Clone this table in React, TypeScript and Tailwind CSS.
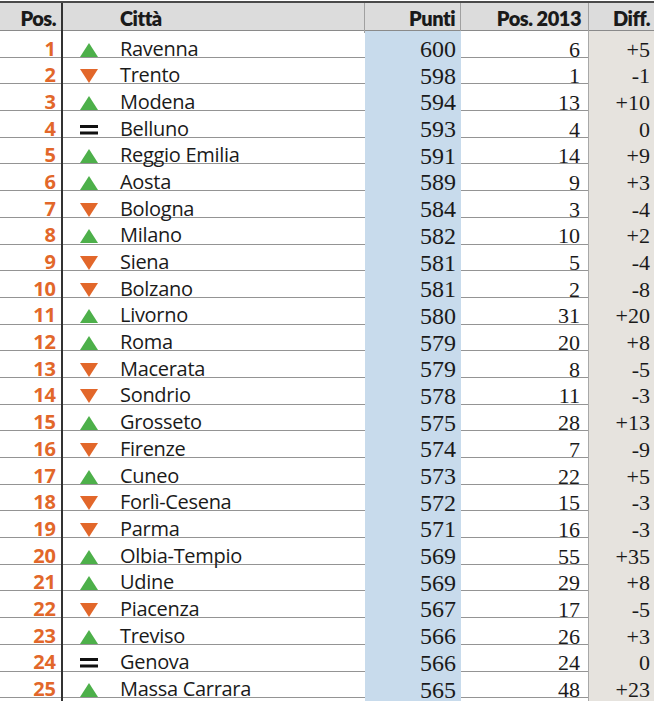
import React from "react";

type Trend = "up" | "down" | "eq";

interface Row {
  pos: number;
  trend: Trend;
  city: string;
  punti: number;
  prev: number;
  diff: string;
}

const rows: Row[] = [
  { pos: 1, trend: "up", city: "Ravenna", punti: 600, prev: 6, diff: "+5" },
  { pos: 2, trend: "down", city: "Trento", punti: 598, prev: 1, diff: "-1" },
  { pos: 3, trend: "up", city: "Modena", punti: 594, prev: 13, diff: "+10" },
  { pos: 4, trend: "eq", city: "Belluno", punti: 593, prev: 4, diff: "0" },
  { pos: 5, trend: "up", city: "Reggio Emilia", punti: 591, prev: 14, diff: "+9" },
  { pos: 6, trend: "up", city: "Aosta", punti: 589, prev: 9, diff: "+3" },
  { pos: 7, trend: "down", city: "Bologna", punti: 584, prev: 3, diff: "-4" },
  { pos: 8, trend: "up", city: "Milano", punti: 582, prev: 10, diff: "+2" },
  { pos: 9, trend: "down", city: "Siena", punti: 581, prev: 5, diff: "-4" },
  { pos: 10, trend: "down", city: "Bolzano", punti: 581, prev: 2, diff: "-8" },
  { pos: 11, trend: "up", city: "Livorno", punti: 580, prev: 31, diff: "+20" },
  { pos: 12, trend: "up", city: "Roma", punti: 579, prev: 20, diff: "+8" },
  { pos: 13, trend: "down", city: "Macerata", punti: 579, prev: 8, diff: "-5" },
  { pos: 14, trend: "down", city: "Sondrio", punti: 578, prev: 11, diff: "-3" },
  { pos: 15, trend: "up", city: "Grosseto", punti: 575, prev: 28, diff: "+13" },
  { pos: 16, trend: "down", city: "Firenze", punti: 574, prev: 7, diff: "-9" },
  { pos: 17, trend: "up", city: "Cuneo", punti: 573, prev: 22, diff: "+5" },
  { pos: 18, trend: "down", city: "Forlì-Cesena", punti: 572, prev: 15, diff: "-3" },
  { pos: 19, trend: "down", city: "Parma", punti: 571, prev: 16, diff: "-3" },
  { pos: 20, trend: "up", city: "Olbia-Tempio", punti: 569, prev: 55, diff: "+35" },
  { pos: 21, trend: "up", city: "Udine", punti: 569, prev: 29, diff: "+8" },
  { pos: 22, trend: "down", city: "Piacenza", punti: 567, prev: 17, diff: "-5" },
  { pos: 23, trend: "up", city: "Treviso", punti: 566, prev: 26, diff: "+3" },
  { pos: 24, trend: "eq", city: "Genova", punti: 566, prev: 24, diff: "0" },
  { pos: 25, trend: "up", city: "Massa Carrara", punti: 565, prev: 48, diff: "+23" },
];

const cols = "grid grid-cols-[63px_57px_245px_96px_128px_65px]";

const TrendIcon = ({ trend }: { trend: Trend }) => {
  if (trend === "eq") {
    return (
      <svg width="18" height="12" viewBox="0 0 18 12">
        <rect x="0" y="1" width="18" height="3" fill="#111" />
        <rect x="0" y="7.5" width="18" height="3" fill="#111" />
      </svg>
    );
  }
  if (trend === "up") {
    return (
      <svg width="18" height="14" viewBox="0 0 18 14">
        <polygon points="9,0 18,14 0,14" fill="#4db04a" />
      </svg>
    );
  }
  return (
    <svg width="18" height="14" viewBox="0 0 18 14">
      <polygon points="0,0 18,0 9,14" fill="#e2672a" />
    </svg>
  );
};

export default function App() {
  return (
    <div className="min-h-[701px] bg-white pt-[1px]">
      <div className="w-[654px] border-t-2 border-[#4a4a4a]">
        {/* header */}
        <div
          className={`${cols} h-[28px] bg-[#dcdcdc] border-b border-[#8a8a8a] text-[20px] font-extrabold text-[#1a1a1a] font-['Lato','Liberation_Sans',sans-serif] tracking-[-0.5px]`}
        >
          <div className="flex items-center justify-end border-r-2 border-[#333] pr-[5px]">
            Pos.
          </div>
          <div />
          <div className="flex items-center border-r border-[#a0a0a0]">Città</div>
          <div className="flex items-center justify-end border-r border-[#a0a0a0] pr-[5px]">
            Punti
          </div>
          <div className="flex items-center justify-end border-r border-[#a0a0a0] pr-[7px]">
            Pos. 2013
          </div>
          <div className="flex items-center justify-end pr-[4px]">Diff.</div>
        </div>

        {/* body */}
        {rows.map((r) => (
          <div
            key={r.pos}
            className={`${cols} h-[26.7px] border-b border-[#949494]`}
          >
            <div className="flex items-center justify-end border-r-2 border-[#333] pr-[5px] pb-[3px] text-[20px] font-bold text-[#e2672a] font-['Open_Sans','Liberation_Sans',sans-serif]">
              {r.pos}
            </div>
            <div className="flex items-center pl-[17px] pb-[1px]">
              <TrendIcon trend={r.trend} />
            </div>
            <div className="flex items-center pb-[3px] text-[20px] text-[#1a1a1a] font-['Open_Sans','Liberation_Sans',sans-serif] tracking-[-0.3px]">
              {r.city}
            </div>
            <div className="flex items-center justify-end bg-[#c8dbec] pr-[5px] pb-[2px] text-[24px] text-[#1a1a1a] font-['Liberation_Serif',serif]">
              {r.punti}
            </div>
            <div className="flex items-center justify-end border-r border-[#a8a8a8] pr-[8px] pb-[2px] text-[22px] text-[#1a1a1a] font-['Liberation_Serif',serif]">
              {r.prev}
            </div>
            <div className="flex items-center justify-end bg-[#e6e3de] pr-[4px] pb-[2px] text-[22px] text-[#1a1a1a] font-['Liberation_Serif',serif]">
              {r.diff}
            </div>
          </div>
        ))}
      </div>
    </div>
  );
}
